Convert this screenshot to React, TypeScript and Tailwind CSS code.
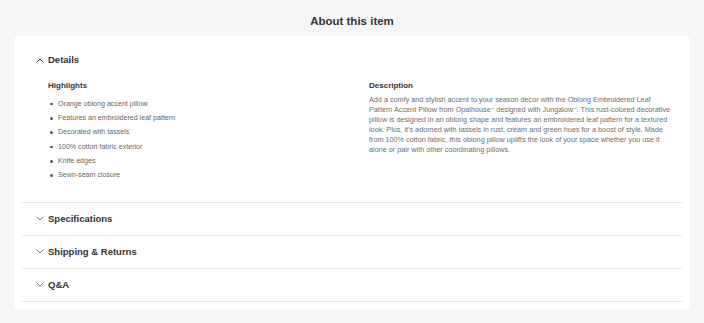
import React from "react";

const highlights = [
  "Orange oblong accent pillow",
  "Features an embroidered leaf pattern",
  "Decorated with tassels",
  "100% cotton fabric exterior",
  "Knife edges",
  "Sewn-seam closure",
];

function Chevron({ up }: { up?: boolean }) {
  return (
    <svg width="8" height="5" viewBox="0 0 8 5" className="shrink-0">
      <polyline
        points={up ? "0.6,4.4 4,1 7.4,4.4" : "0.6,0.6 4,4 7.4,0.6"}
        fill="none"
        stroke={up ? "#333333" : "#777777"}
        strokeWidth="1"
      />
    </svg>
  );
}

function Row({ label }: { label: string }) {
  return (
    <div className="border-t border-[#e6e6e6]">
      <div className="h-[32px] flex items-center pl-[14px]">
        <Chevron />
        <span className="ml-[4px] text-[9.5px] font-bold text-[#333333]">{label}</span>
      </div>
    </div>
  );
}

function TM() {
  return <span className="text-[3.5px] leading-none align-[2px]">™</span>;
}

export default function App() {
  return (
    <div className="min-h-screen bg-[#f6f6f6] font-['Liberation_Sans',Arial,sans-serif] pt-[14px]">
      <h2 className="text-center text-[11.5px] leading-[14px] font-bold text-[#333333]">About this item</h2>
      <div className="mx-[14px] mt-[8px] bg-white rounded-[4px] px-2 pt-2 pb-[7px] shadow-[0_0_1px_rgba(0,0,0,0.06)]">
        <div>
          <div className="h-[33px] flex items-center pl-[14px]">
            <Chevron up />
            <span className="ml-[4px] text-[9.5px] font-bold text-[#333333]">Details</span>
          </div>
          <div className="grid grid-cols-[311px_304px] gap-x-[10px] pl-[26px] pt-[3px] pb-[19px]">
            <div>
              <h3 className="text-[8px] leading-[12px] font-bold text-[#333333]">Highlights</h3>
              <ul className="mt-[5px]">
                {highlights.map((h) => (
                  <li key={h} className="flex items-center h-[14.3px] text-[7.1px] text-[#666666]">
                    <span className="ml-[2px] w-[2.5px] h-[2.5px] rounded-full bg-[#555555] shrink-0" />
                    <span className="ml-[5.5px]">{h}</span>
                  </li>
                ))}
              </ul>
            </div>
            <div>
              <h3 className="text-[8px] leading-[12px] font-bold text-[#333333]">Description</h3>
              <p className="mt-[3px] text-[7.25px] leading-[10px] text-[#6e6e6e]">
                Add a comfy and stylish accent to your season decor with the Oblong Embroidered Leaf Pattern Accent
                Pillow from Opalhouse<TM /> designed with Jungalow<TM />. This rust-colored decorative pillow is designed in an
                oblong shape and features an embroidered leaf pattern for a textured look. Plus, it's adorned with
                tassels in rust, cream and green hues for a boost of style. Made from 100% cotton fabric, this oblong
                pillow uplifts the look of your space whether you use it alone or pair with other coordinating pillows.
              </p>
            </div>
          </div>
        </div>
        <Row label="Specifications" />
        <Row label="Shipping & Returns" />
        <Row label="Q&A" />
        <div className="border-t border-[#e6e6e6]" />
      </div>
    </div>
  );
}
